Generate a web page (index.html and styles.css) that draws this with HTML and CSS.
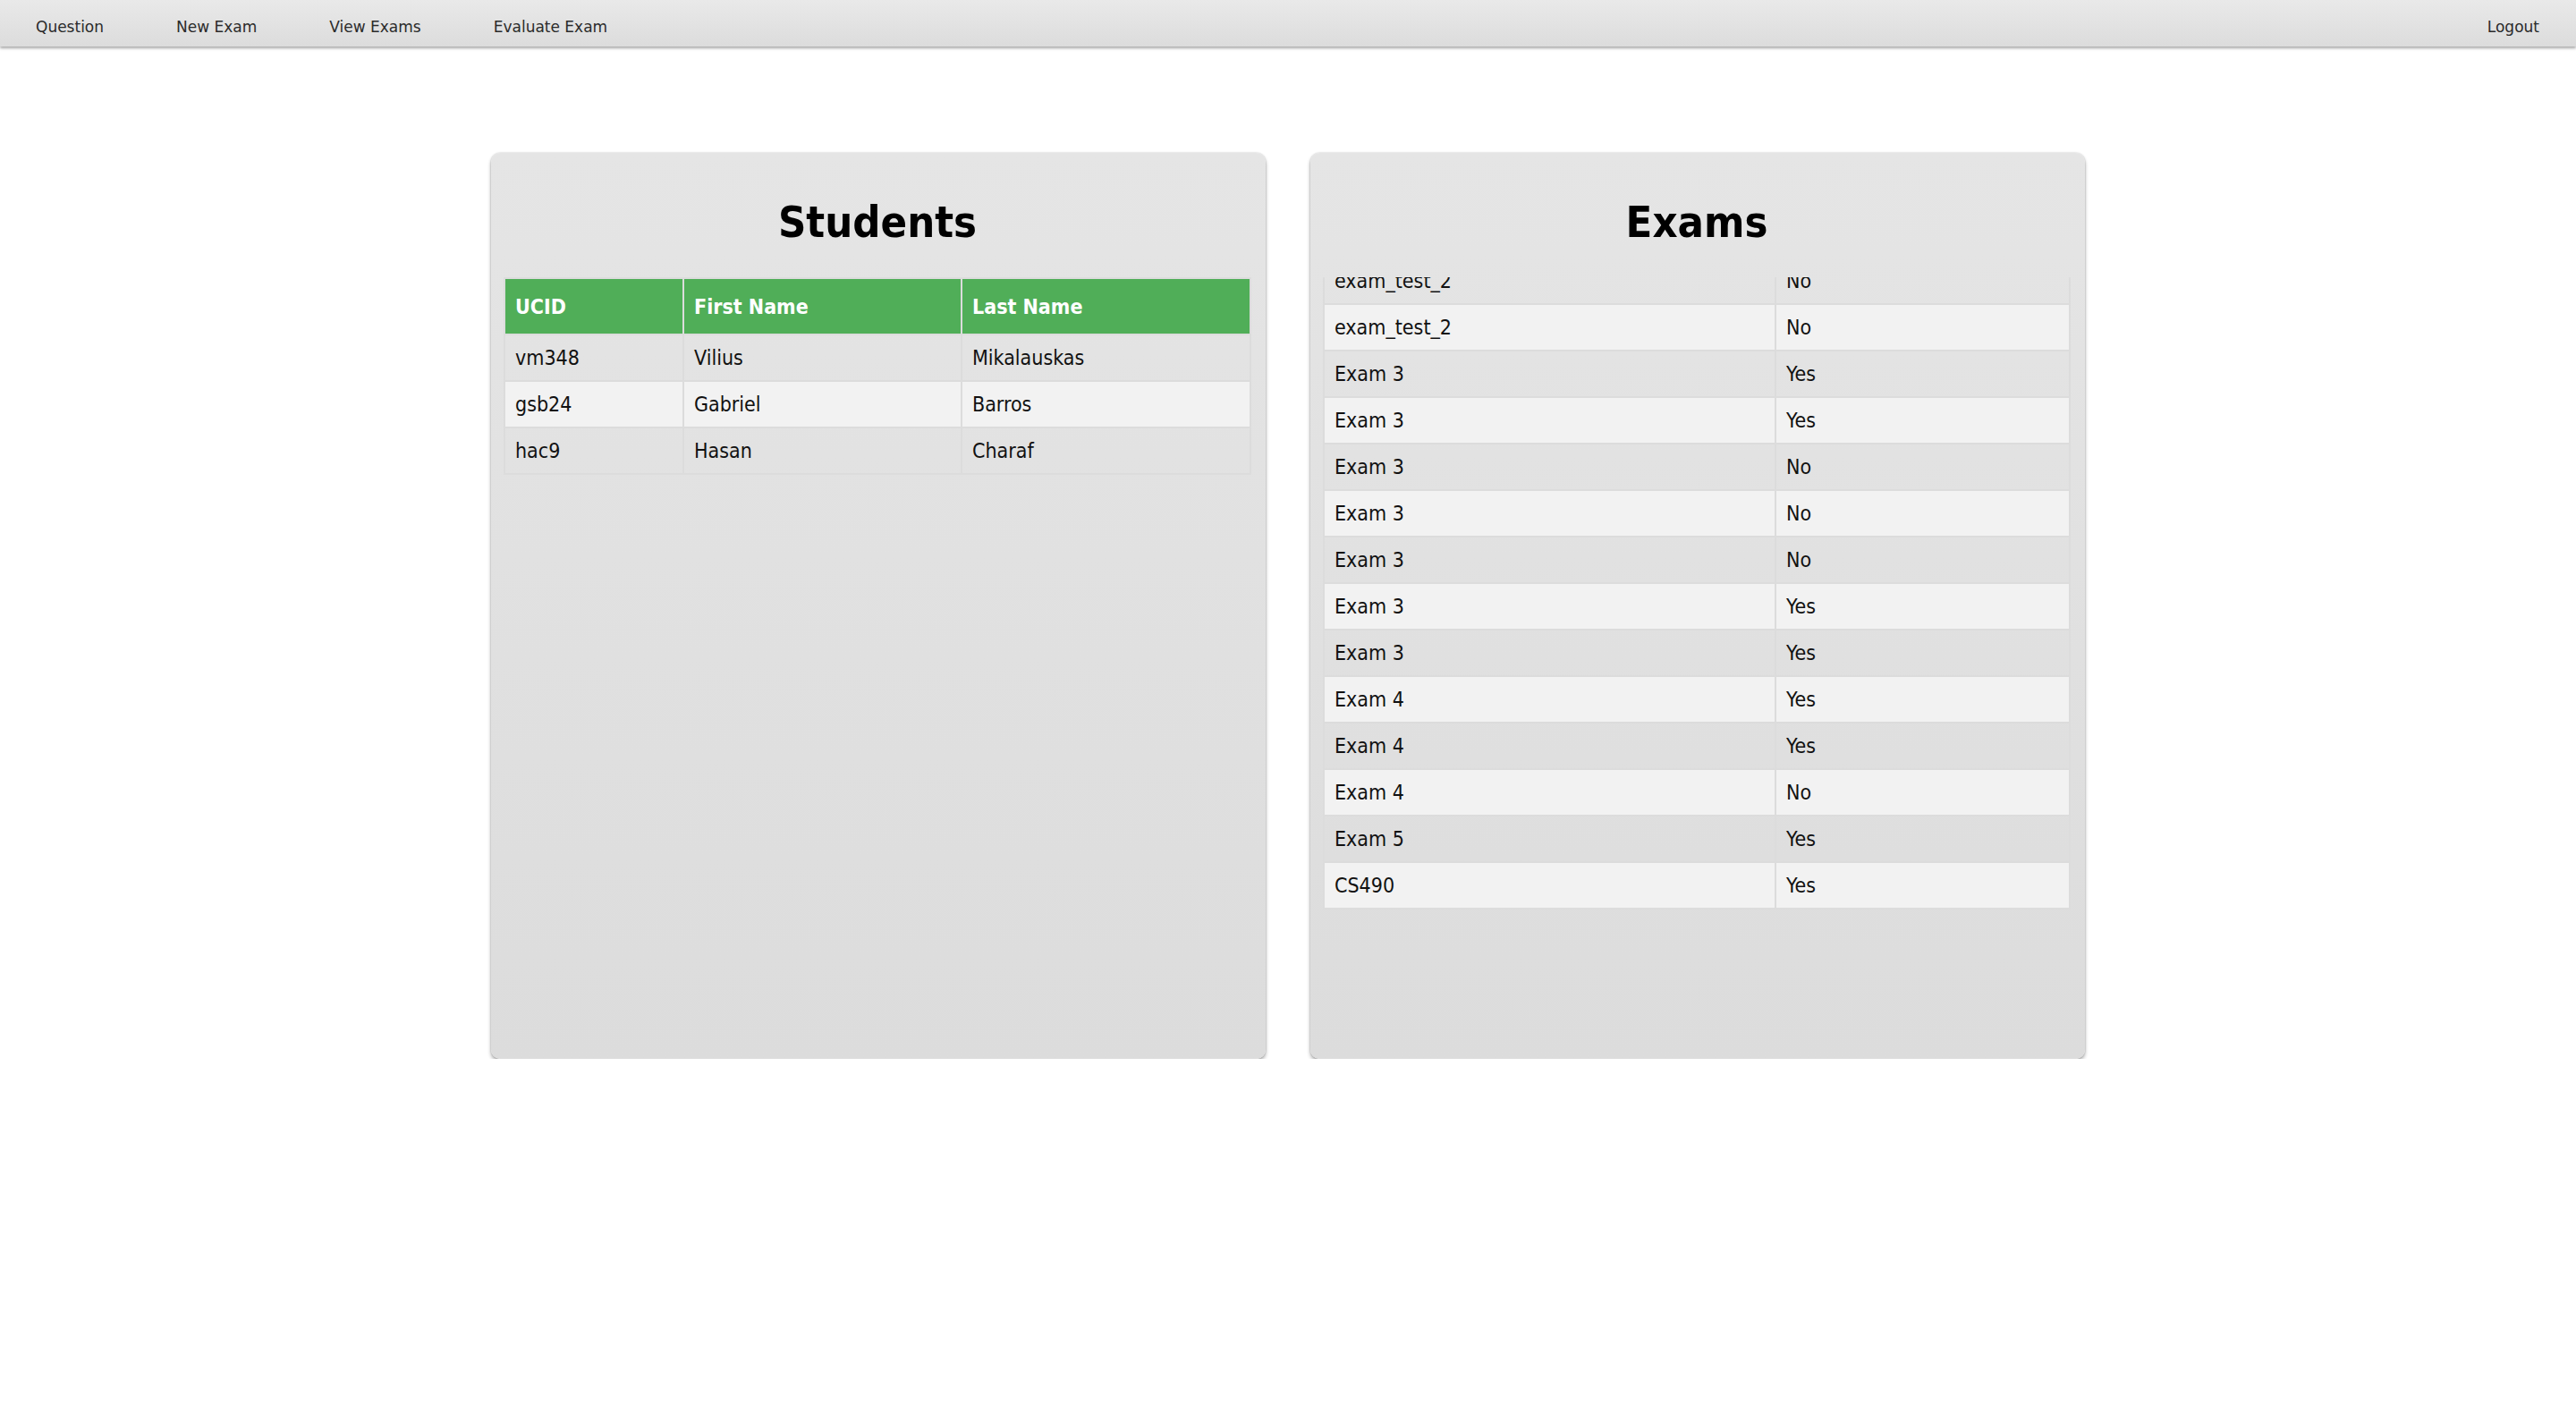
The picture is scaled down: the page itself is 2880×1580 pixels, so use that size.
FILE: index.html
```html
<!DOCTYPE html>
<html lang="en">
<head>
<meta charset="utf-8">
<title>Exams</title>
<link rel="stylesheet" href="styles.css">
</head>
<body>
<nav class="topbar">
  <div class="nav-group">
    <a class="nav-link" href="#">Question</a>
    <a class="nav-link" href="#">New Exam</a>
    <a class="nav-link" href="#">View Exams</a>
    <a class="nav-link" href="#">Evaluate Exam</a>
  </div>
  <a class="nav-link" href="#">Logout</a>
</nav>
<main class="panels">
  <section class="card">
    <h2 class="card-title">Students</h2>
    <table class="data students">
      <colgroup><col class="c-ucid"><col class="c-first"><col class="c-last"></colgroup>
      <thead>
        <tr><th>UCID</th><th>First Name</th><th>Last Name</th></tr>
      </thead>
      <tbody>
        <tr><td>vm348</td><td>Vilius</td><td>Mikalauskas</td></tr>
        <tr><td>gsb24</td><td>Gabriel</td><td>Barros</td></tr>
        <tr><td>hac9</td><td>Hasan</td><td>Charaf</td></tr>
      </tbody>
    </table>
  </section>
  <section class="card">
    <h2 class="card-title">Exams</h2>
    <div class="scroll" id="examScroll">
      <table class="data exams">
        <colgroup><col class="c-name"><col class="c-rel"></colgroup>
        <thead>
          <tr><th>Exam Name</th><th>Released</th></tr>
        </thead>
        <tbody>
          <tr><td>exam_test</td><td>No</td></tr>
          <tr><td>exam_test_1</td><td>No</td></tr>
          <tr><td>exam_test_2</td><td>No</td></tr>
          <tr><td>exam_test_2</td><td>No</td></tr>
          <tr><td>Exam 3</td><td>Yes</td></tr>
          <tr><td>Exam 3</td><td>Yes</td></tr>
          <tr><td>Exam 3</td><td>No</td></tr>
          <tr><td>Exam 3</td><td>No</td></tr>
          <tr><td>Exam 3</td><td>No</td></tr>
          <tr><td>Exam 3</td><td>Yes</td></tr>
          <tr><td>Exam 3</td><td>Yes</td></tr>
          <tr><td>Exam 4</td><td>Yes</td></tr>
          <tr><td>Exam 4</td><td>Yes</td></tr>
          <tr><td>Exam 4</td><td>No</td></tr>
          <tr><td>Exam 5</td><td>Yes</td></tr>
          <tr><td>CS490</td><td>Yes</td></tr>
        </tbody>
      </table>
    </div>
  </section>
</main>
<script src="script.js"></script>
</body>
</html>
```

FILE: styles.css
```css
html, body {
  margin: 0;
  padding: 0;
  background: #ffffff;
}

body {
  font-family: "DejaVu Sans", "Liberation Sans", sans-serif;
  color: #111111;
}

.topbar {
  display: flex;
  justify-content: space-between;
  height: 52px;
  box-sizing: border-box;
  padding-top: 20px;
  background: linear-gradient(#e9e9e9, #dcdcdc);
  box-shadow: 0 2px 3px rgba(0, 0, 0, 0.35);
  position: relative;
  z-index: 2;
}

.nav-group {
  display: flex;
}

.nav-link {
  display: block;
  padding: 0 41px 0 40px;
  font-family: "DejaVu Sans", sans-serif;
  font-size: 17px;
  line-height: 20px;
  color: #2b2b2b;
  text-decoration: none;
}

.panels {
  display: flex;
  justify-content: center;
  gap: 50px;
  padding-top: 119px;
}

.card {
  width: 866px;
  height: 1013px;
  box-sizing: border-box;
  padding: 49px 16px 0 14px;
  border-radius: 10px;
  background: linear-gradient(#e5e5e5, #dcdcdc);
  box-shadow: 0 3px 4px rgba(0, 0, 0, 0.32), 0 0 2px rgba(0, 0, 0, 0.25);
}

.card-title {
  margin: 0 0 33px;
  text-align: center;
  font-family: "DejaVu Sans Condensed", "DejaVu Sans", sans-serif;
  font-stretch: condensed;
  font-weight: bold;
  font-size: 48.5px;
  line-height: 57px;
  color: #000000;
}

.data {
  width: 834px;
  border-collapse: collapse;
  table-layout: fixed;
  font-family: "DejaVu Sans Condensed", "DejaVu Sans", sans-serif;
  font-stretch: condensed;
  font-size: 23px;
  line-height: 28px;
  color: #111111;
}

.data th,
.data td {
  border: 2px solid #dcdcdc;
  padding: 11px 11px;
  text-align: left;
  white-space: nowrap;
}

.data th {
  padding-top: 16.5px;
  padding-bottom: 16.5px;
  background: #50ae58;
  color: #ffffff;
  font-weight: bold;
}

.data tbody tr:nth-child(even) {
  background: #f2f2f2;
}

.c-ucid { width: 200px; }
.c-first { width: 311px; }
.c-last { width: 323px; }

.c-name { width: 505px; }
.c-rel { width: 329px; }

.scroll {
  height: 707px;
  overflow: hidden;
}
```

FILE: script.js
```js
var box = document.getElementById('examScroll');
box.scrollTop = box.scrollHeight;
```
